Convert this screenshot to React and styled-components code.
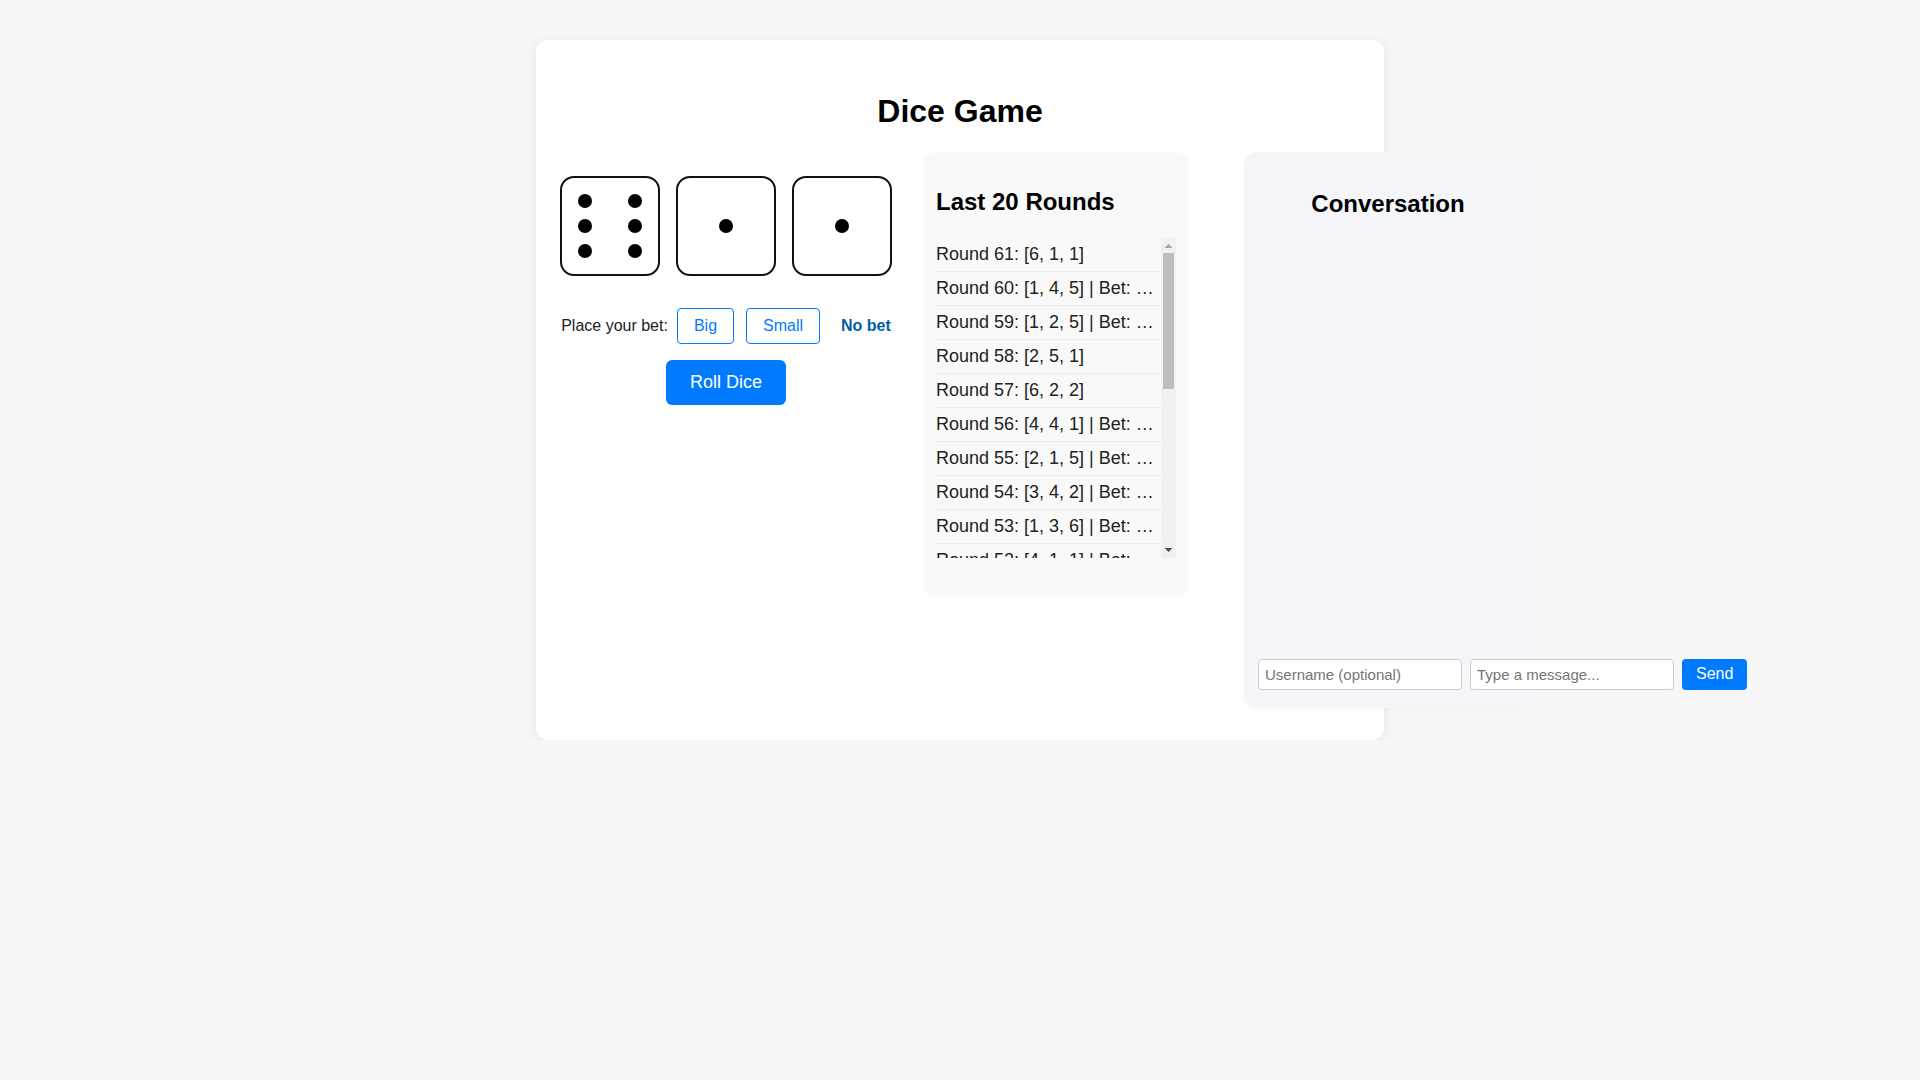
import React from "react";
import styled, { createGlobalStyle } from "styled-components";

const GlobalStyle = createGlobalStyle`
  body {
    margin: 0;
    background: #f7f7f7;
    font-family: "Liberation Sans", Arial, sans-serif;
    color: #000;
  }
`;

const Card = styled.div`
  box-sizing: border-box;
  width: 848px;
  margin: 40px auto 0;
  padding: 32px 24px;
  background: #fff;
  border-radius: 12px;
  box-shadow: 0 2px 12px rgba(0, 0, 0, 0.08);
`;

const Title = styled.h1`
  font-size: 32px;
  font-weight: bold;
  text-align: center;
  margin: 21.44px 0;
`;

const Columns = styled.div`
  display: flex;
  align-items: flex-start;
`;

const GameColumn = styled.div`
  flex: none;
  width: 332px;
  padding-top: 24px;
  display: flex;
  flex-direction: column;
  align-items: center;
`;

const DiceRow = styled.div`
  display: flex;
  gap: 16px;
  margin-bottom: 32px;
`;

const Die = styled.div`
  box-sizing: border-box;
  width: 100px;
  height: 100px;
  border: 2px solid #111;
  border-radius: 14px;
  background: #fff;
  display: grid;
  grid-template-columns: repeat(3, 25px);
  grid-template-rows: repeat(3, 25px);
  place-content: center;
  place-items: center;
`;

const Pip = styled.span`
  width: 14px;
  height: 14px;
  border-radius: 50%;
  background: #000;
  grid-column: ${({ $col }) => $col};
  grid-row: ${({ $row }) => $row};
`;

const BetRow = styled.div`
  display: flex;
  align-items: center;
  margin-bottom: 16px;
  font-size: 16px;
`;

const BetLabel = styled.span`
  margin-right: 9px;
  color: #222;
`;

const BetButton = styled.button`
  font: inherit;
  padding: 8px 16px;
  margin-right: 12px;
  background: #fff;
  color: #007bff;
  border: 1px solid #007bff;
  border-radius: 4px;
`;

const BetStatus = styled.span`
  margin-left: 9px;
  font-weight: bold;
  color: #005fa3;
`;

const RollButton = styled.button`
  font-family: inherit;
  font-size: 18px;
  padding: 12px 24px;
  background: #007bff;
  color: #fff;
  border: none;
  border-radius: 6px;
`;

const RoundsPanel = styled.div`
  box-sizing: border-box;
  flex: none;
  width: 264px;
  height: 445px;
  margin-left: 32px;
  padding: 16px 12px;
  background: #f9f9f9;
  border-radius: 12px;
  box-shadow: 0 1px 4px rgba(0, 0, 0, 0.02);
`;

const PanelTitle = styled.h2`
  font-size: 24px;
  font-weight: bold;
  margin: 20px 0 22px;
  text-align: ${({ $center }) => ($center ? "center" : "left")};
`;

const ListFrame = styled.div`
  display: flex;
  height: 320px;
`;

const RoundList = styled.ul`
  flex: 1;
  min-width: 0;
  list-style: none;
  margin: 0;
  padding: 0;
  overflow: hidden;
`;

const RoundItem = styled.li`
  padding: 6px 4px 6px 0;
  font-size: 18px;
  color: #222;
  border-bottom: 1px solid #eee;
  white-space: nowrap;
  overflow: hidden;
  text-overflow: ellipsis;
`;

const ScrollTrack = styled.div`
  flex: none;
  width: 15px;
  background: #f1f1f1;
  display: flex;
  flex-direction: column;
  align-items: center;
`;

const ScrollArrow = styled.svg`
  flex: none;
  display: block;
  width: 15px;
  height: 15px;
  fill: ${({ $active }) => ($active ? "#505050" : "#a3a3a3")};
`;

const ScrollThumb = styled.div`
  flex: none;
  width: 11px;
  height: 136px;
  background: #bebebe;
`;

const ScrollSpacer = styled.div`
  flex: 1;
`;

const ChatPanel = styled.div`
  box-sizing: border-box;
  flex: none;
  width: 288px;
  height: 556px;
  margin-left: 56px;
  padding: 18px 14px;
  background: #f5f6fa;
  border-radius: 12px;
  box-shadow: 0 1px 4px rgba(0, 0, 0, 0.02);
  display: flex;
  flex-direction: column;
`;

const Messages = styled.div`
  flex: 1;
`;

const ChatForm = styled.form`
  display: flex;
  gap: 8px;
`;

const ChatInput = styled.input`
  box-sizing: border-box;
  flex: none;
  width: 204px;
  height: 31px;
  padding: 6px;
  font-family: inherit;
  font-size: 15px;
  background: #fff;
  border: 1px solid #ccc;
  border-radius: 4px;
`;

const SendButton = styled.button`
  flex: none;
  font-family: inherit;
  font-size: 16px;
  padding: 0 14px 1px;
  background: #007bff;
  color: #fff;
  border: none;
  border-radius: 4px;
`;

const SIX = [
  [1, 1],
  [3, 1],
  [1, 2],
  [3, 2],
  [1, 3],
  [3, 3],
];
const ONE = [[2, 2]];

const DICE = [SIX, ONE, ONE];

const ROUNDS = [
  "Round 61: [6, 1, 1]",
  "Round 60: [1, 4, 5] | Bet: Small | Won",
  "Round 59: [1, 2, 5] | Bet: Small | Won",
  "Round 58: [2, 5, 1]",
  "Round 57: [6, 2, 2]",
  "Round 56: [4, 4, 1] | Bet: Small | Won",
  "Round 55: [2, 1, 5] | Bet: Big | Lost",
  "Round 54: [3, 4, 2] | Bet: Big | Lost",
  "Round 53: [1, 3, 6] | Bet: Big | Lost",
  "Round 52: [4, 1, 1] | Bet: Big | Lost",
];

const App = () => (
  <>
    <GlobalStyle />
    <Card>
      <Title>Dice Game</Title>
      <Columns>
        <GameColumn>
          <DiceRow>
            {DICE.map((pips, i) => (
              <Die key={i}>
                {pips.map(([col, row]) => (
                  <Pip key={`${col}-${row}`} $col={col} $row={row} />
                ))}
              </Die>
            ))}
          </DiceRow>
          <BetRow>
            <BetLabel>Place your bet:</BetLabel>
            <BetButton type="button">Big</BetButton>
            <BetButton type="button">Small</BetButton>
            <BetStatus>No bet</BetStatus>
          </BetRow>
          <RollButton type="button">Roll Dice</RollButton>
        </GameColumn>
        <RoundsPanel>
          <PanelTitle>Last 20 Rounds</PanelTitle>
          <ListFrame>
            <RoundList>
              {ROUNDS.map((round) => (
                <RoundItem key={round}>{round}</RoundItem>
              ))}
            </RoundList>
            <ScrollTrack>
              <ScrollArrow viewBox="0 0 15 15">
                <path d="M7.5 6 L11.5 10 L3.5 10 Z" />
              </ScrollArrow>
              <ScrollThumb />
              <ScrollSpacer />
              <ScrollArrow viewBox="0 0 15 15" $active>
                <path d="M7.5 9 L11.5 5 L3.5 5 Z" />
              </ScrollArrow>
            </ScrollTrack>
          </ListFrame>
        </RoundsPanel>
        <ChatPanel>
          <PanelTitle $center>Conversation</PanelTitle>
          <Messages />
          <ChatForm onSubmit={(e) => e.preventDefault()}>
            <ChatInput placeholder="Username (optional)" />
            <ChatInput placeholder="Type a message..." />
            <SendButton type="submit">Send</SendButton>
          </ChatForm>
        </ChatPanel>
      </Columns>
    </Card>
  </>
);

export default App;
